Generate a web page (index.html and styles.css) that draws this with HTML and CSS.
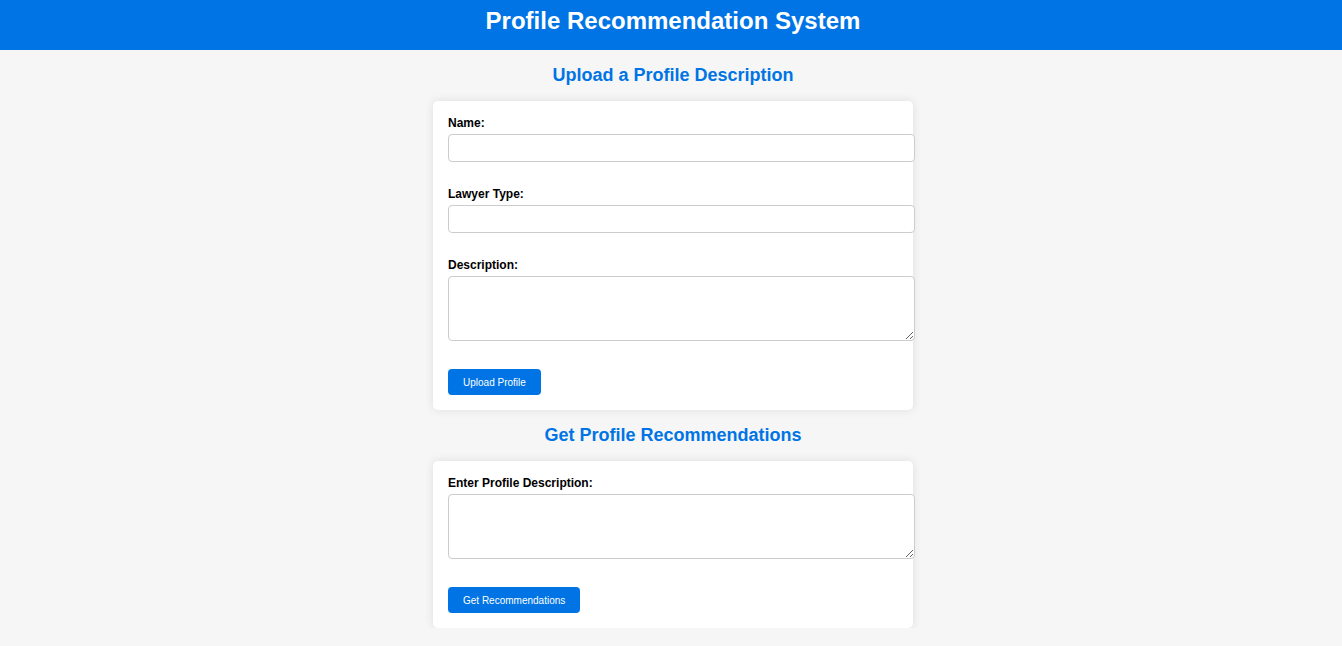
FILE: index.html
```html
<!DOCTYPE html>
<html lang="en">
<head>
<meta charset="utf-8">
<title>Profile Recommendation System</title>
<link rel="stylesheet" href="styles.css">
</head>
<body>
<header class="site-header">
  <h1 class="site-title">Profile Recommendation System</h1>
</header>
<main class="main">
  <h2 class="section-title">Upload a Profile Description</h2>
  <form class="card">
    <div class="field">
      <label class="field-label" for="name">Name:</label>
      <input class="field-input" id="name" type="text">
    </div>
    <div class="field">
      <label class="field-label" for="type">Lawyer Type:</label>
      <input class="field-input" id="type" type="text">
    </div>
    <div class="field">
      <label class="field-label" for="desc">Description:</label>
      <textarea class="field-area" id="desc"></textarea>
    </div>
    <div class="actions">
      <button class="btn" type="button">Upload Profile</button>
    </div>
  </form>
  <h2 class="section-title">Get Profile Recommendations</h2>
  <form class="card">
    <div class="field">
      <label class="field-label" for="query">Enter Profile Description:</label>
      <textarea class="field-area" id="query"></textarea>
    </div>
    <div class="actions">
      <button class="btn" type="button">Get Recommendations</button>
    </div>
  </form>
</main>
</body>
</html>
```

FILE: styles.css
```css
html, body {
  margin: 0;
  padding: 0;
}

body {
  background: #f6f6f6;
  font-family: "Liberation Sans", Arial, sans-serif;
  color: #000;
}

.site-header {
  background: #0074e4;
  height: 50px;
  box-sizing: border-box;
  padding: 7px 0 0 4px;
}

.site-title {
  margin: 0;
  color: #fff;
  font-size: 24px;
  font-weight: bold;
  line-height: 28px;
  text-align: center;
}

.main {
  display: flex;
  flex-direction: column;
  align-items: center;
  padding-left: 4px;
}

.section-title {
  margin: 15px 0 15px;
  color: #0074e4;
  font-size: 18px;
  font-weight: bold;
  line-height: 21px;
  text-align: center;
}

.card {
  width: 450px;
  background: #fff;
  border-radius: 5px;
  box-shadow: 0 0 10px rgba(0, 0, 0, 0.1);
  padding: 15px 15px 15px;
  display: flex;
  flex-direction: column;
  gap: 25px;
}

.field {
  display: flex;
  flex-direction: column;
}

.field-label {
  display: block;
  font-size: 12px;
  font-weight: bold;
  line-height: 14px;
  margin-bottom: 4px;
}

.field-input,
.field-area {
  box-sizing: border-box;
  width: 467px;
  margin: 0;
  border: 1px solid #ccc;
  border-radius: 4px;
  padding: 0 8px;
  font-family: "Liberation Sans", Arial, sans-serif;
  font-size: 13px;
  background: #fff;
}

.field-input {
  height: 28px;
}

.field-area {
  height: 65px;
  padding-top: 6px;
  resize: both;
}

.actions {
  display: flex;
  padding-top: 3px;
}

.btn {
  height: 26px;
  padding: 0 15px;
  border: none;
  border-radius: 4px;
  background: #0074e4;
  color: #fff;
  font-family: "Liberation Sans", Arial, sans-serif;
  font-size: 10px;
  cursor: pointer;
}
```
